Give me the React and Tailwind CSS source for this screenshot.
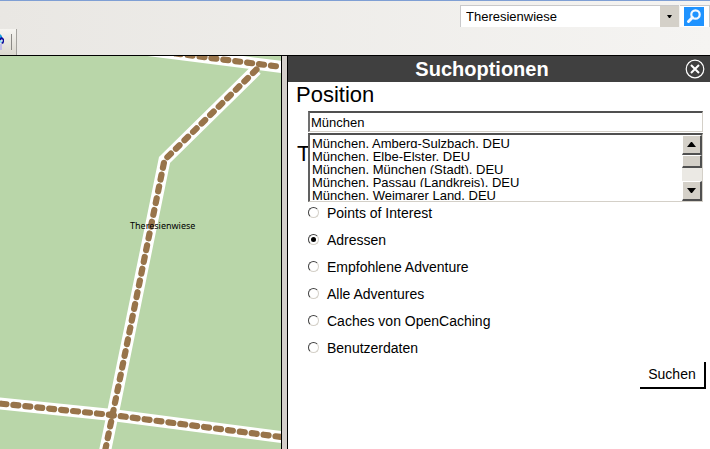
import { useState } from "react";

const PLACES = [
  "München, Amberg-Sulzbach, DEU",
  "München, Elbe-Elster, DEU",
  "München, München (Stadt), DEU",
  "München, Passau (Landkreis), DEU",
  "München, Weimarer Land, DEU",
];

const SOURCES = [
  "Points of Interest",
  "Adressen",
  "Empfohlene Adventure",
  "Alle Adventures",
  "Caches von OpenCaching",
  "Benutzerdaten",
];

// Paths of the map, in map units
const ROADS = [
  "M140 49 L282 67",
  "M256.5 69.5 L164.5 160 L112.500 415 L104 456",
  "M-10.500 402.500 L112 415 L285 437.500",
];

function Toolbar() {
  return (
    <header className="flex h-[55px] items-stretch justify-between border-b border-black bg-linear-to-r from-[#e9e7e3] to-[#f5f4f2]">
      <div className="flex items-end">
        <div className="flex h-[26px] w-[17px] items-center justify-between border-r border-[#a5a39e] bg-linear-to-b from-[#f6f5f1] to-[#dcd9d0]">
          <svg className="h-[18px] w-[5px]" viewBox="0 0 5 18" aria-hidden="true">
            <path d="M0 1 L2 3 V6 H0Z" fill="#1a9be0" />
            <path d="M0 5 L2 4 L4 6 V9 L3 11 L1 10 L3 8 L2 6 L0 8Z" fill="#0a0a9c" />
            <path d="M0 7 L2 8 L1 10 L0 10Z" fill="#8fe0ff" />
            <path d="M0 11 H2 V17 H0Z" fill="#c3bde8" />
          </svg>
          <span className="mr-1 h-4 w-px bg-[#8c8a86]" />
        </div>
      </div>
      <form className="flex h-[26px] pt-1" onSubmit={(e) => e.preventDefault()}>
        <input
          aria-label="Suche"
          defaultValue="Theresienwiese"
          className="w-[200px] border-t border-l border-[#c9c9cb] bg-white pl-[5px] text-[13px] text-black outline-none"
        />
        <button
          type="button"
          aria-label="Verlauf"
          className="flex w-[19px] items-center justify-center border-t border-[#c9c9cb] bg-[#d4d0c8]"
        >
          <svg className="h-[3px] w-[5px]" viewBox="0 0 5 3" aria-hidden="true">
            <path d="M0 0 H5 L3 3 H2Z" fill="#000" />
          </svg>
        </button>
        <button
          type="submit"
          aria-label="Suchen"
          className="ml-px flex h-[22px] w-[30px] items-center border-t border-r border-[#c9c9cb] bg-white pl-1"
        >
          <svg className="h-[19px] w-5 bg-[#1f93ff]" viewBox="0 0 20 19" aria-hidden="true">
            <circle cx="11.500" cy="7.500" r="4.200" fill="none" stroke="#f4f8ff" strokeWidth="2.200" />
            <path d="M8.500 10.500 L4.500 14.500" stroke="#f4f8ff" strokeWidth="3" strokeLinecap="round" />
          </svg>
        </button>
      </form>
    </header>
  );
}

function Map() {
  return (
    <section aria-label="Karte" className="relative w-[282px] shrink-0 overflow-hidden border-r border-black bg-[#b9d6a9]">
      <svg
        className="absolute inset-0 h-full w-full"
        viewBox="0 56 281 393"
        preserveAspectRatio="xMinYMin slice"
        aria-hidden="true"
      >
        <g fill="none" stroke="#fff" strokeWidth="12">
          {ROADS.map((d) => (
            <path key={d} d={d} />
          ))}
        </g>
        <g fill="none" stroke="#98744a" strokeWidth="6.200" strokeLinecap="round" strokeLinejoin="round" strokeDasharray="5 7">
          {ROADS.map((d) => (
            <path key={d} d={d} />
          ))}
        </g>
        <circle cx="112" cy="415" r="4" fill="#98744a" />
      </svg>
      <span className="absolute top-[164px] left-[130px] font-['Noto_Sans',sans-serif] text-[9px] leading-3 text-black">
        Theresienwiese
      </span>
    </section>
  );
}

function ScrollButton({ label, d }) {
  return (
    <button
      type="button"
      aria-label={label}
      className="flex h-5 w-5 shrink-0 items-center justify-center border-t border-r-2 border-b-2 border-l border-t-white border-r-[#505050] border-b-[#505050] border-l-white bg-[#d4d0c8]"
    >
      <svg className="h-[5px] w-[9px]" viewBox="0 0 9 5" aria-hidden="true">
        <path d={d} fill="#000" />
      </svg>
    </button>
  );
}

function Suggestions() {
  return (
    <div className="absolute inset-x-0 top-full mt-px flex h-[69px] border-t-2 border-r border-b border-l-2 border-t-[#505050] border-r-[#d4d0c8] border-b-[#d4d0c8] border-l-[#606060] bg-white">
      <ul role="listbox" aria-label="Orte" className="min-w-0 flex-1 overflow-hidden pl-0.5 text-[13px]">
        {PLACES.map((place) => (
          <li key={place} role="option" aria-selected="false" className="h-[13px] overflow-hidden leading-[18px] whitespace-nowrap">
            {place}
          </li>
        ))}
      </ul>
      <div className="flex w-5 flex-col bg-[#ebe9e4]">
        <ScrollButton label="Nach oben" d="M0 5 L4 0 H5 L9 5Z" />
        <span className="h-[13px] border-t border-r-2 border-b-2 border-l border-t-white border-r-[#505050] border-b-[#505050] border-l-white bg-[#d4d0c8]" />
        <span className="flex-1" />
        <ScrollButton label="Nach unten" d="M0 0 H9 L5 5 H4Z" />
      </div>
    </div>
  );
}

function SearchPanel() {
  const [source, setSource] = useState("Adressen");
  return (
    <aside className="min-w-0 flex-1 border-l border-black bg-white">
      <div className="flex h-[26px] items-center bg-[#404040] text-white">
        <h1 className="flex-1 text-center text-[20px] leading-6 font-bold">Suchoptionen</h1>
        <button type="button" aria-label="Schließen" className="flex w-[34px] justify-center pl-1">
          <svg className="h-5 w-5" viewBox="0 0 20 20" fill="none" stroke="#fff" aria-hidden="true">
            <circle cx="10" cy="10" r="8.800" strokeWidth="1.200" />
            <path d="M6 6 L14 14 M14 6 L6 14" strokeWidth="2" />
          </svg>
        </button>
      </div>
      <form className="pr-[7px] pl-2" onSubmit={(e) => e.preventDefault()}>
        <h2 id="position" className="text-[22px] leading-[26px]">
          Position
        </h2>
        <div className="relative z-10 mt-[3px] ml-3">
          <input
            aria-labelledby="position"
            defaultValue="München"
            className="block h-[21px] w-full border-t-2 border-r border-b border-l-2 border-t-[#505050] border-r-[#d4d0c8] border-b-[#d4d0c8] border-l-[#707070] bg-white pl-px text-[13px] text-black outline-none"
          />
          <Suggestions />
        </div>
        <h2 className="mt-[9px] pl-px text-[22px] leading-[26px]">T</h2>
        <div role="radiogroup" aria-label="Suchquelle" className="mt-[33px] ml-3">
          {SOURCES.map((name) => (
            <label key={name} className="flex h-[27px] items-center gap-2 text-[14px]">
              <span className="relative mb-0.5 flex h-[11px] w-[11px]">
                <input
                  type="radio"
                  name="source"
                  checked={source === name}
                  onChange={() => setSource(name)}
                  className="peer h-[11px] w-[11px] appearance-none rounded-full border border-t-[#404040] border-r-[#d4d0c8] border-b-[#d4d0c8] border-l-[#404040] bg-white"
                />
                <span className="pointer-events-none absolute inset-0 m-auto hidden h-[5px] w-[5px] rounded-full bg-black peer-checked:block" />
              </span>
              {name}
            </label>
          ))}
        </div>
        <div className="-mr-[3px] flex justify-end">
          <button type="submit" className="h-[27px] w-[66px] border-r-2 border-b-2 border-black bg-white text-[14px] text-black">
            Suchen
          </button>
        </div>
      </form>
    </aside>
  );
}

export default function App() {
  return (
    <div className="flex min-h-screen flex-col border-t border-[#7f9fd4] bg-[#d4cfcb] font-['Liberation_Sans',Arial,sans-serif] text-black">
      <Toolbar />
      <main className="flex flex-1 gap-[5px]">
        <Map />
        <SearchPanel />
      </main>
    </div>
  );
}
